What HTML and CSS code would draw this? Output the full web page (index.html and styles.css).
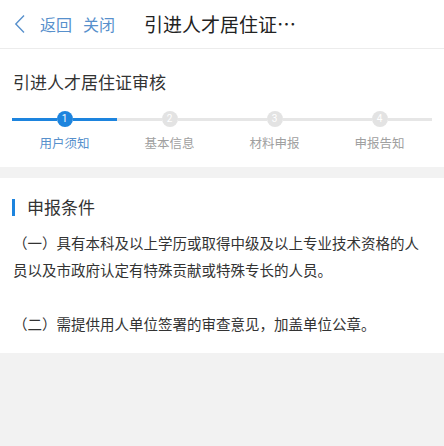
FILE: index.html
```html
<!DOCTYPE html>
<html lang="zh-CN">
<head>
<meta charset="utf-8">
<title>引进人才居住证审核</title>
<link rel="stylesheet" href="styles.css">
</head>
<body>
<header class="nav">
  <svg class="back-icon" width="12" height="20" viewBox="0 0 12 20"><path d="M10 1.5 L1.8 10 L10 18.5" fill="none" stroke="#5790cc" stroke-width="1.4"/></svg>
  <span class="nav-link">返回</span>
  <span class="nav-link">关闭</span>
  <span class="nav-title">引进人才居住证…</span>
</header>
<section class="card steps-card">
  <h1 class="page-title">引进人才居住证审核</h1>
  <div class="steps">
    <div class="step active">
      <div class="track"><span class="seg on"></span><span class="dot">1</span><span class="seg on"></span></div>
      <div class="label">用户须知</div>
    </div>
    <div class="step">
      <div class="track"><span class="seg"></span><span class="dot">2</span><span class="seg"></span></div>
      <div class="label">基本信息</div>
    </div>
    <div class="step">
      <div class="track"><span class="seg"></span><span class="dot">3</span><span class="seg"></span></div>
      <div class="label">材料申报</div>
    </div>
    <div class="step">
      <div class="track"><span class="seg"></span><span class="dot">4</span><span class="seg"></span></div>
      <div class="label">申报告知</div>
    </div>
  </div>
</section>
<section class="card content-card">
  <h2 class="section-title"><span class="bar"></span>申报条件</h2>
  <p class="para">（一）具有本科及以上学历或取得中级及以上专业技术资格的人员以及市政府认定有特殊贡献或特殊专长的人员。</p>
  <p class="para second">（二）需提供用人单位签署的审查意见，加盖单位公章。</p>
</section>
</body>
</html>
```
FILE: styles.css
```css
* { box-sizing: border-box; }
html, body {
  margin: 0;
  padding: 0;
  background: #f2f2f2;
  font-family: "Noto Sans CJK SC", "Noto Sans", sans-serif;
  color: #333;
}
.nav {
  height: 49px;
  background: #fff;
  border-bottom: 1px solid #ececec;
  display: flex;
  align-items: center;
  padding-left: 14px;
}
.back-icon { display: block; margin-right: 14px; }
.nav-link {
  font-size: 16px;
  line-height: 22px;
  color: #5790cc;
  margin-right: 11px;
}
.nav-title {
  margin-left: 18px;
  font-size: 19px;
  line-height: 26px;
  color: #222;
  white-space: nowrap;
}
.card { background: #fff; }
.steps-card {
  padding: 21px 12px 15px;
  margin-bottom: 11px;
}
.page-title {
  margin: 0 0 0 1px;
  font-size: 17px;
  font-weight: normal;
  line-height: 24px;
  color: #333;
}
.steps {
  display: flex;
  margin-top: 17px;
}
.step { flex: 1; display: flex; flex-direction: column; align-items: center; }
.track { display: flex; align-items: center; width: 100%; height: 16px; }
.seg { flex: 1; height: 3px; background: #e6e6e6; }
.seg.on { background: #1d84de; }
.dot {
  width: 16px;
  height: 16px;
  border-radius: 50%;
  background: #e3e3e3;
  color: #fff;
  font-size: 10px;
  line-height: 16px;
  text-align: center;
  font-family: "Roboto", sans-serif;
}
.step.active .dot { background: #1d84de; }
.label {
  margin-top: 7px;
  font-size: 12.5px;
  line-height: 18px;
  color: #a0a0a0;
}
.step.active .label { color: #5790cc; }
.content-card {
  padding: 17px 13px 16px;
}
.section-title {
  margin: 0;
  display: flex;
  align-items: center;
  font-size: 17px;
  font-weight: normal;
  line-height: 24px;
  color: #333;
}
.bar {
  width: 3px;
  height: 17px;
  background: #1d84de;
  margin-right: 12px;
  margin-left: -1px;
}
.para {
  margin: 10px 0 0;
  font-size: 14.5px;
  line-height: 27px;
  color: #333;
}
.para.second { margin-top: 27px; }
```
